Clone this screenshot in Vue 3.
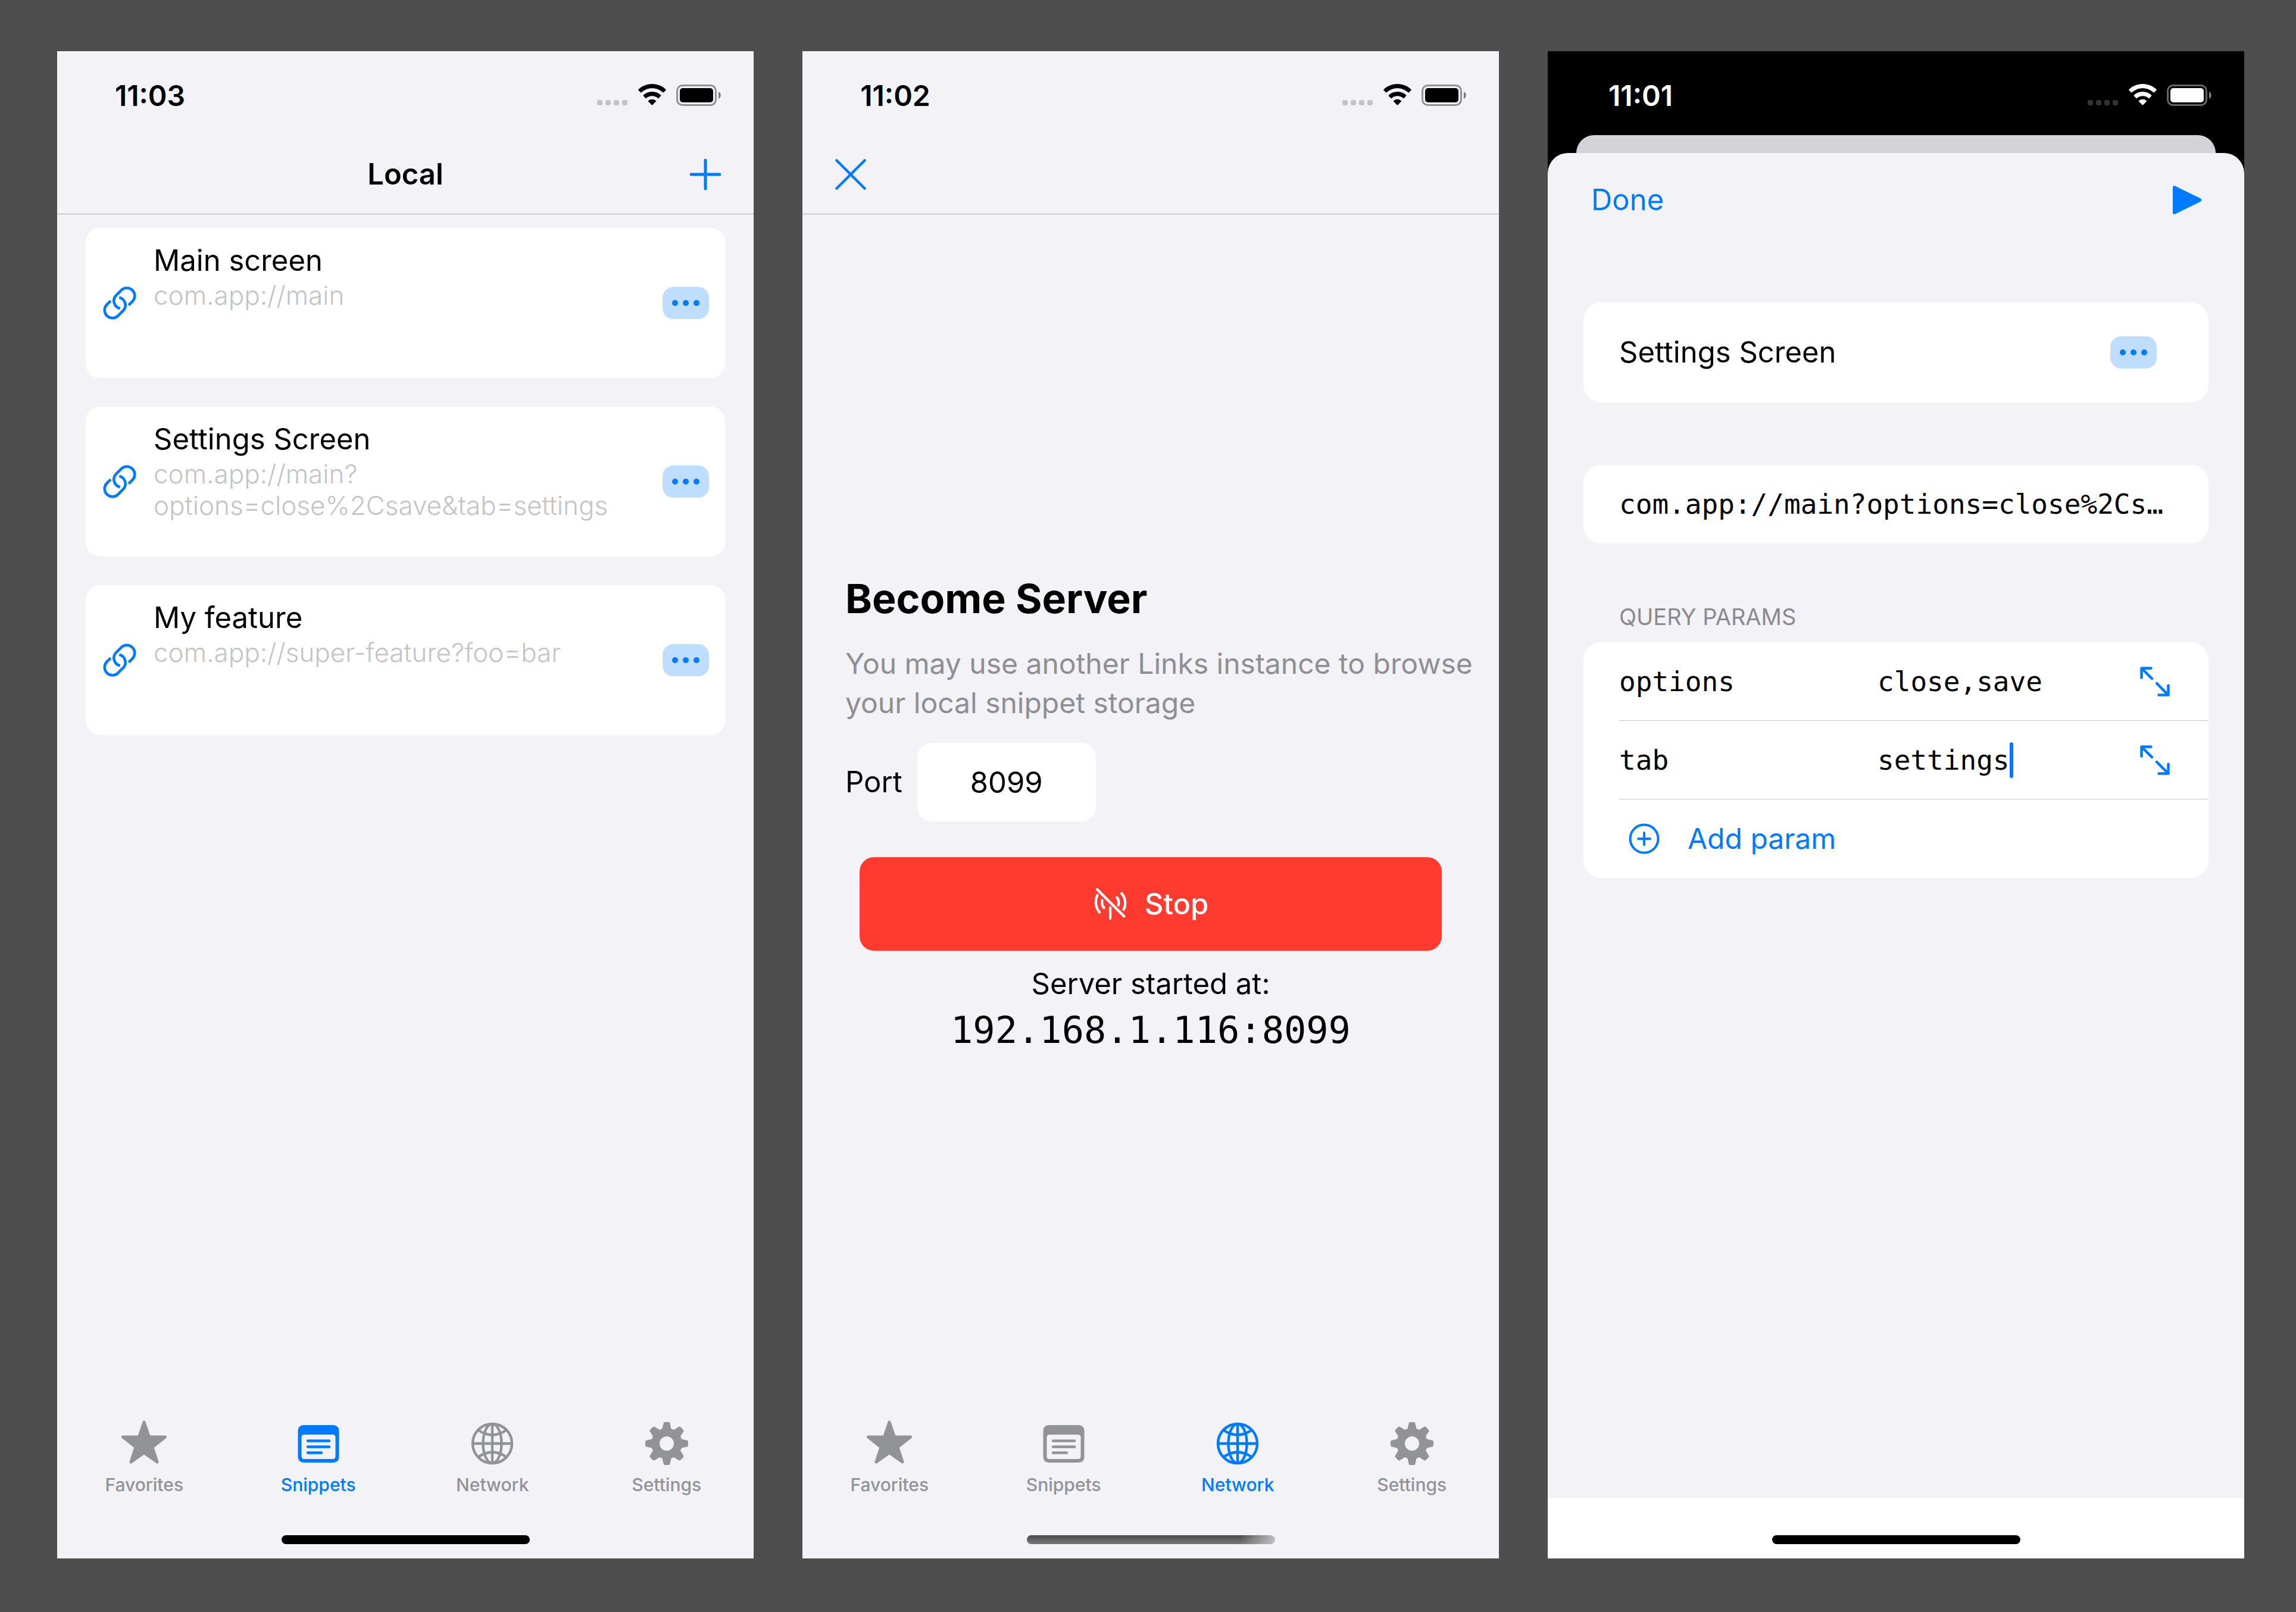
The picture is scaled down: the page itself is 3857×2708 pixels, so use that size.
<script setup>
import { ref } from 'vue'

const snippets = [
  { title: 'Main screen', lines: ['com.app://main'] },
  { title: 'Settings Screen', lines: ['com.app://main?', 'options=close%2Csave&tab=settings'] },
  { title: 'My feature', lines: ['com.app://super-feature?foo=bar'] },
]
const tabs = ['Favorites', 'Snippets', 'Network', 'Settings']
const phones = [
  { time: '11:03', active: 'Snippets', kind: 'local' },
  { time: '11:02', active: 'Network', kind: 'server' },
  { time: '11:01', active: '', kind: 'editor' },
]
const port = ref('8099')
const params = ref([
  { key: 'options', value: 'close,save', focused: false },
  { key: 'tab', value: 'settings', focused: true },
])
</script>

<template>
  <main class="board">
    <section v-for="phone in phones" :key="phone.kind" class="phone" :class="phone.kind">
      <header class="status">
        <time class="clock">{{ phone.time }}</time>
        <svg class="signals" viewBox="0 0 208 38" aria-hidden="true">
          <g class="dots">
            <rect v-for="n in 4" :key="n" :x="(n - 1) * 14" y="27" width="9" height="9" rx="3" />
          </g>
          <g fill="currentColor">
            <path d="M92.500 7.200C99.500 7.200 105.900 9.900 110.700 14.300C111.100 14.600 111.600 14.600 111.900 14.300L115.600 10.600C116 10.200 116 9.600 115.600 9.200C109.500 3.500 101.400 0 92.500 0S75.500 3.500 69.400 9.200C69 9.600 69 10.200 69.400 10.600L73.100 14.300C73.400 14.600 73.900 14.600 74.300 14.300C79.100 9.900 85.500 7.200 92.500 7.200Z" />
            <path d="M92.500 20.300C96.200 20.300 99.600 21.700 102.200 23.900C102.600 24.200 103.100 24.200 103.400 23.900L107.100 20.200C107.500 19.800 107.500 19.200 107.100 18.800C103.200 15.300 98.100 13.100 92.500 13.100S81.800 15.300 77.900 18.800C77.500 19.200 77.500 19.800 77.900 20.200L81.600 23.900C81.900 24.200 82.400 24.200 82.800 23.900C85.400 21.700 88.800 20.300 92.500 20.300Z" />
            <path d="M98.900 29.500C99.300 29.100 99.300 28.500 98.800 28.200C97.200 26.700 94.900 25.800 92.500 25.800S87.800 26.700 86.200 28.200C85.700 28.500 85.700 29.100 86.100 29.500L91.800 35.200C92.200 35.600 92.800 35.600 93.200 35.200Z" />
            <rect x="139" y="7" width="56" height="24" rx="5" />
            <path d="M204 13v12c5-2 5-10 0-12Z" opacity=".5" />
          </g>
          <rect x="134.500" y="2.500" width="65" height="33" rx="9" fill="none" stroke="currentColor" stroke-width="3" opacity=".4" />
        </svg>
      </header>

      <template v-if="phone.kind === 'local'">
        <nav class="navbar">
          <span></span>
          <h1>Local</h1>
          <button class="plain end" aria-label="Add snippet">
            <svg class="i52" viewBox="0 0 52 52"><path d="M26 2v48M2 26h48" stroke="currentColor" stroke-width="5" stroke-linecap="round" /></svg>
          </button>
        </nav>
        <div class="list">
          <article v-for="s in snippets" :key="s.title" class="card">
            <svg class="i56 blue" viewBox="0 0 56 56" fill="none" stroke="currentColor" stroke-width="4.600">
              <path d="M43 31.700L49.700 25.100A13.300 13.300 0 0 0 30.900 6.300L21.900 15.300A13.300 13.300 0 0 0 28.700 37.300" />
              <path d="M13 24.300L6.300 30.900A13.300 13.300 0 0 0 25.100 49.700L34.100 40.700A13.300 13.300 0 0 0 27.300 18.700" />
            </svg>
            <div class="text">
              <h2>{{ s.title }}</h2>
              <p v-for="l in s.lines" :key="l">{{ l }}</p>
            </div>
            <button class="more" aria-label="More"><i></i><i></i><i></i></button>
          </article>
        </div>
      </template>

      <template v-else-if="phone.kind === 'server'">
        <nav class="navbar">
          <button class="plain" aria-label="Close">
            <svg class="i52" viewBox="0 0 52 52"><path d="M2.500 2.500l47 47M49.500 2.500l-47 47" stroke="currentColor" stroke-width="4.500" stroke-linecap="round" /></svg>
          </button>
        </nav>
        <div class="become">
          <h2>Become Server</h2>
          <p class="hint">You may use another Links instance to browse your local snippet storage</p>
          <div class="port">
            <label for="port">Port</label>
            <input id="port" v-model="port" inputmode="numeric" />
          </div>
          <button class="stop">
            <svg viewBox="0 0 57 54" fill="none" stroke="currentColor" stroke-width="4.300" stroke-linecap="round">
              <path d="M7 2L52.300 47.300M29 32.500V51" />
              <path d="M7.200 12A27 27 0 0 0 11 40.500M15.500 20.500A14 14 0 0 0 18.500 33M40.300 15.500A14 14 0 0 1 42.500 28.500M48 8.500A25 25 0 0 1 51.500 36" />
            </svg>
            <span>Stop</span>
          </button>
          <p class="started">Server started at:</p>
          <p class="address">192.168.1.116:8099</p>
        </div>
      </template>

      <template v-else>
        <div class="behind"></div>
        <div class="sheet">
          <nav class="sheetbar">
            <button class="plain">Done</button>
            <button class="plain" aria-label="Run">
              <svg class="play" viewBox="0 0 50 50" fill="currentColor"><path d="M1 4Q1 0 5 1.500L47 22Q52 25 47 28L5 48.500Q1 50 1 46Z" /></svg>
            </button>
          </nav>
          <div class="group name">
            <span>Settings Screen</span>
            <button class="more" aria-label="More"><i></i><i></i><i></i></button>
          </div>
          <div class="group url">com.app://main?options=close%2Cs…</div>
          <h3>QUERY PARAMS</h3>
          <div class="group params">
            <div v-for="p in params" :key="p.key" class="param">
              <label :for="'value-' + p.key">{{ p.key }}</label>
              <div class="value">
                <input :id="'value-' + p.key" v-model="p.value" :style="{ width: p.value.length + 'ch' }" />
                <span v-if="p.focused" class="caret"></span>
              </div>
              <button class="plain" aria-label="Expand">
                <svg class="expand" viewBox="0 0 50 50" fill="none" stroke="currentColor" stroke-width="4.500" stroke-linecap="round" stroke-linejoin="round">
                  <path d="M2.500 18.500V2.500H18.500M4 4L20 20M47.500 31.500V47.500H31.500M46 46L28 28" />
                </svg>
              </button>
            </div>
            <button class="add">
              <svg class="i52" viewBox="0 0 52 52" fill="none" stroke="currentColor" stroke-width="4" stroke-linecap="round">
                <circle cx="26" cy="26" r="23.500" /><path d="M26 16v20M16 26h20" />
              </svg>
              <span>Add param</span>
            </button>
          </div>
        </div>
      </template>

      <footer class="tabs" v-if="phone.active">
        <button v-for="t in tabs" :key="t" class="tab" :class="{ on: t === phone.active }">
          <svg v-if="t === 'Favorites'" viewBox="0 0 78 78" fill="currentColor" stroke="currentColor" stroke-width="5" stroke-linejoin="round">
            <path d="M39 3L47.500 28H74.500L53 45L61 70L39 54.500L17 70L25 45L3.500 28H30.500Z" />
          </svg>
          <svg v-else-if="t === 'Snippets'" viewBox="0 0 78 78" fill="currentColor">
            <path fill-rule="evenodd" d="M15 8H63Q73.500 8 73.500 18.500V60.500Q73.500 71 63 71H15Q4.500 71 4.500 60.500V18.500Q4.500 8 15 8ZM15 24Q10.500 24 10.500 28.500V60.500Q10.500 65 15 65H63Q67.500 65 67.500 60.500V28.500Q67.500 24 63 24Z" />
            <path d="M21 34.500H57M21 44.500H57M21 54.500H44" stroke="currentColor" stroke-width="4.500" stroke-linecap="round" />
          </svg>
          <svg v-else-if="t === 'Network'" viewBox="0 0 78 78" fill="none" stroke="currentColor" stroke-width="4.400">
            <circle cx="39" cy="39" r="33" /><ellipse cx="39" cy="39" rx="15.500" ry="33" />
            <path d="M39 6V72M6 39H72M15.500 16.500Q39 32.500 62.500 16.500M15.500 61.500Q39 45.500 62.500 61.500" />
          </svg>
          <svg v-else viewBox="0 0 78 78" fill="currentColor">
            <path fill-rule="evenodd" d="M34 3.500Q39 2.200 44 3.500L46.500 14L51 15.900L60.200 10.200Q65 12.500 67.800 17.800L62.100 27L64 31.500L74.500 34Q75.800 39 74.500 44L64 46.500L62.100 51L67.800 60.200Q65 65.500 60.200 67.800L51 62.100L46.500 64L44 74.500Q39 75.800 34 74.500L31.500 64L27 62.100L17.800 67.800Q13 65.500 10.200 60.200L15.900 51L14 46.500L3.500 44Q2.200 39 3.500 34L14 31.500L15.900 27L10.200 17.800Q12.500 13 17.800 10.200L27 15.900L31.500 14ZM39 27A12 12 0 1 0 39 51A12 12 0 1 0 39 27Z" />
          </svg>
          <span>{{ t }}</span>
        </button>
      </footer>
      <div class="home"><span></span></div>
    </section>
  </main>
</template>

<style>
body { background: #4e4e4e; }
</style>

<style scoped>
.board {
  box-sizing: border-box;
  min-height: 100vh;
  display: flex;
  align-items: stretch;
  gap: 82px;
  padding: 86px 87px 90px 96px;
  background: #4e4e4e;
  font-family: Inter, "Noto Sans", sans-serif;
  font-size: 49px;
  line-height: 66px;
  color: #000;
}
.phone {
  flex: 1;
  min-width: 0;
  display: flex;
  flex-direction: column;
  background: #f2f2f7;
}
h1, h2, h3, p { margin: 0; font-size: inherit; font-weight: 400; }
button { font: inherit; border: 0; padding: 0; cursor: pointer; }
input { font: inherit; color: inherit; border: 0; padding: 0; outline: 0; min-width: 0; }
svg { display: block; flex: none; }
.plain { background: none; color: #007aff; }
.i52 { width: 52px; height: 52px; }
.i56 { width: 56px; height: 56px; }
.blue { color: #007aff; }

.status {
  height: 141px;
  display: flex;
  align-items: center;
  justify-content: space-between;
  padding-right: 55px;
  box-sizing: border-box;
}
.clock { width: 312px; text-align: center; font-size: 48px; font-weight: 600; padding-top: 8px; }
.signals { width: 208px; height: 38px; padding-top: 7px; }
.dots { fill: #c3c2c7; }

.navbar {
  height: 132px;
  display: grid;
  grid-template-columns: 1fr auto 1fr;
  align-items: center;
  padding: 0 55px;
  border-bottom: 1px solid #a9a8ad;
}
.navbar h1 { font-weight: 600; }
.navbar .plain { justify-self: start; }
.navbar .end { justify-self: end; }

.list { flex: 1; display: flex; flex-direction: column; gap: 48px; padding: 23px 48px; }
.card {
  height: 252px;
  box-sizing: border-box;
  display: flex;
  align-items: center;
  padding: 0 27px 0 29px;
  border-radius: 24px;
  background: #fff;
}
.text { flex: 1; align-self: flex-start; padding: 23px 0 0 29px; }
.text h2 { line-height: 64px; }
.text p { font-size: 44px; font-weight: 300; line-height: 53px; color: #c4c4c6; }
.more {
  width: 78px;
  height: 54px;
  display: flex;
  align-items: center;
  justify-content: center;
  gap: 8px;
  border-radius: 18px;
  background: #bfdeff;
}
.more i { width: 10px; height: 10px; border-radius: 50%; background: #007aff; }

.become { flex: 1; display: flex; flex-direction: column; align-items: stretch; padding: 600px 0 0 72px; }
.become h2 { font-size: 68px; font-weight: 700; line-height: 90px; }
.hint { margin-top: 32px; font-size: 48px; color: #8e8e93; }
.port { display: flex; align-items: center; gap: 25px; margin-top: 34px; }
.port input { width: 300px; height: 132px; box-sizing: border-box; border-radius: 24px; background: #fff; text-align: center; }
.stop {
  height: 157px;
  margin: 60px 96px 0 24px;
  display: flex;
  align-items: center;
  justify-content: center;
  gap: 30px;
  border-radius: 24px;
  background: #ff3b30;
  color: #fff;
  font-weight: 500;
}
.stop svg { width: 57px; height: 54px; }
.started, .address { margin-right: 72px; text-align: center; }
.started { margin-top: 23px; }
.address { font-family: "DejaVu Sans Mono", monospace; font-size: 62px; line-height: 84px; margin-top: 3px; }

.editor { background: #000; }
.editor .status { color: #fff; }
.editor .dots { fill: #333; }
.behind { height: 30px; margin: 0 48px; border-radius: 30px 30px 0 0; background: #d4d3d8; }
.sheet { flex: 1; border-radius: 34px 34px 0 0; background: #f2f2f7; padding: 0 60px; }
.sheetbar { height: 158px; display: flex; align-items: center; justify-content: space-between; padding: 0 11px 0 13px; }
.play { width: 50px; height: 50px; }
.group { box-sizing: border-box; border-radius: 30px; background: #fff; }
.name { height: 168px; display: flex; align-items: center; justify-content: space-between; margin-top: 93px; padding: 0 87px 0 60px; }
.url { margin-top: 105px; height: 132px; padding-left: 60px; line-height: 132px; white-space: nowrap; }
.url, .param { font-family: "DejaVu Sans Mono", monospace; font-size: 46px; }
h3 { margin: 90px 0 10px 60px; font-size: 38px; color: #8a8a8e; }
.params { padding-left: 60px; }
.param { height: 131px; display: flex; align-items: center; border-bottom: 1px solid #c6c6c8; padding-right: 65px; }
.param label { width: 434px; }
.value { flex: 1; display: flex; align-items: center; }
.caret { width: 6px; height: 60px; border-radius: 3px; background: #007aff; }
.expand { width: 50px; height: 50px; }
.add { width: 100%; height: 132px; display: flex; align-items: center; gap: 47px; padding-left: 16px; background: none; color: #007aff; font-size: 48px; }

.tabs { display: flex; padding-bottom: 4px; }
.tab { flex: 1; display: flex; flex-direction: column; align-items: center; background: none; color: #929397; font-size: 30px; font-weight: 500; line-height: 36px; gap: 12px; }
.tab.on { color: #007aff; }
.tab svg { width: 78px; height: 78px; }
.home { display: flex; justify-content: center; align-items: flex-end; height: 102px; box-sizing: border-box; padding-bottom: 24px; }
.home span { width: 417px; height: 15px; border-radius: 8px; background: #000; }
.server .home span { background: linear-gradient(90deg, transparent 86%, #c0c0c0), linear-gradient(#4a4a4a, #7a7879); }
.editor .home { background: #fff; }
</style>
